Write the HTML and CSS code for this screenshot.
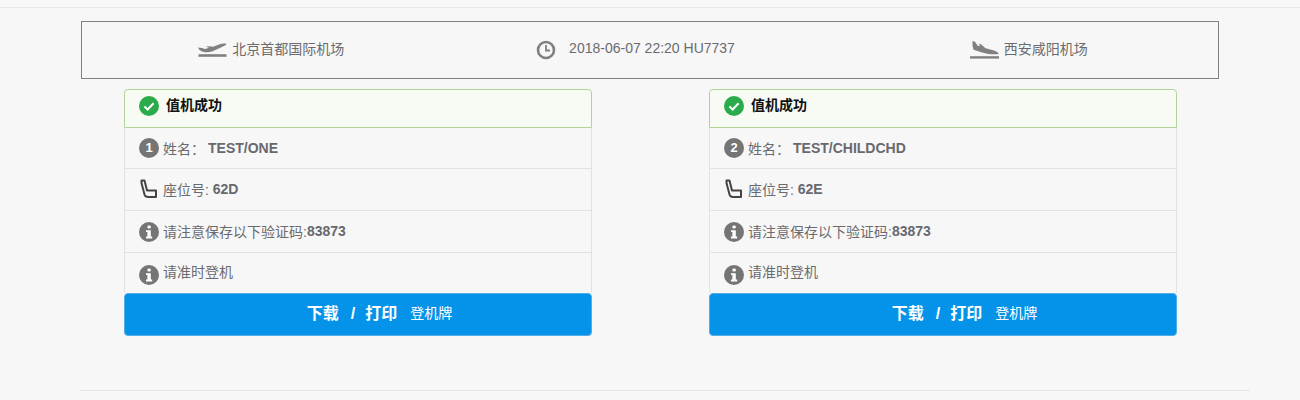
FILE: index.html
```html
<!DOCTYPE html>
<html lang="zh-CN">
<head>
  <meta charset="UTF-8">
  <meta name="viewport" content="width=device-width, initial-scale=1.0">
  <title>值机成功</title>
  <link rel="stylesheet" href="styles.css">
</head>
<body>
  <div class="top-line"></div>

  <div class="main">
    <div class="flight">
      <div class="flight-item">
        <svg class="plane" viewBox="0 0 29 18"><path d="M0 6.5 L4 7 L7 8 L11 6.8 L8 5.8 L10 5.2 L15 5.8 L21 3.4 C23.5 2.5 27 2.2 28.4 3 C28.6 3.8 26 5 23.5 6.2 L14 10.6 C10 11.6 6 11.4 4 10.6 L1.5 9 Z"/><rect x="0.5" y="13.2" width="28" height="2.6"/></svg>
        <span>北京首都国际机场</span>
      </div>
      <div class="flight-item flight-time">
        <svg class="clock" viewBox="0 0 20 20"><circle cx="10" cy="10" r="8" fill="none" stroke="#808080" stroke-width="2.6"/><path d="M10 5v5.5h4" fill="none" stroke="#808080" stroke-width="1.8"/></svg>
        <span>2018-06-07 22:20 HU7737</span>
      </div>
      <div class="flight-item">
        <svg class="plane" viewBox="0 0 29 18"><path d="M2.5 0 L5 .8 L7.5 4.6 L10 5.2 L9 2.8 L11 3.2 L15.5 7.2 L24 9.6 C26.5 10.4 28.5 11.6 28.6 13 C25 13.6 18 13.2 12 11.4 L3.5 8.8 L2.5 5 Z"/><rect x="0" y="15.2" width="29" height="2.4"/></svg>
        <span>西安咸阳机场</span>
      </div>
    </div>

    <div class="passengers">
      <div class="col">
        <div class="card">
          <div class="success">
            <svg class="icon" viewBox="0 0 20 20"><circle cx="10" cy="10" r="10" fill="#2bab4c"/><path d="M5.4 10.4l3.2 3.1 6-6.3" fill="none" stroke="#fff" stroke-width="2"/></svg>
            <b>值机成功</b>
          </div>
          <div class="row row-name"><i class="num">1</i><span>姓名：</span><b class="name">TEST/ONE</b></div>
          <div class="row">
            <svg class="seat" viewBox="0 0 18 20"><path d="M1.5 1.5 H4.5 L7 11.5 H16 V18 H8 C6 18 5 17 4.5 15.5 L1.5 4 Z" fill="none" stroke="#444" stroke-width="2" stroke-linejoin="round"/></svg>
            <span>座位号: </span><b>62D</b>
          </div>
          <div class="row">
            <svg class="icon" viewBox="0 0 20 20"><circle cx="10" cy="10" r="10" fill="#757575"/><rect x="8.4" y="3.4" width="3.4" height="3.2" rx="1.4" fill="#fff"/><path d="M7 8.2h4.8v6.4h1.4v1.8H7v-1.8h1.4V10H7z" fill="#fff"/></svg>
            <span>请注意保存以下验证码:</span><b>83873</b>
          </div>
          <div class="row row-last">
            <svg class="icon" viewBox="0 0 20 20"><circle cx="10" cy="10" r="10" fill="#757575"/><rect x="8.4" y="3.4" width="3.4" height="3.2" rx="1.4" fill="#fff"/><path d="M7 8.2h4.8v6.4h1.4v1.8H7v-1.8h1.4V10H7z" fill="#fff"/></svg>
            <span>请准时登机</span>
          </div>
          <a class="print-btn" href="#"><strong><span>下载</span><span>/</span><span class="print-word">打印</span></strong><small>登机牌</small></a>
        </div>
      </div>

      <div class="col">
        <div class="card">
          <div class="success">
            <svg class="icon" viewBox="0 0 20 20"><circle cx="10" cy="10" r="10" fill="#2bab4c"/><path d="M5.4 10.4l3.2 3.1 6-6.3" fill="none" stroke="#fff" stroke-width="2"/></svg>
            <b>值机成功</b>
          </div>
          <div class="row row-name"><i class="num">2</i><span>姓名：</span><b class="name">TEST/CHILDCHD</b></div>
          <div class="row">
            <svg class="seat" viewBox="0 0 18 20"><path d="M1.5 1.5 H4.5 L7 11.5 H16 V18 H8 C6 18 5 17 4.5 15.5 L1.5 4 Z" fill="none" stroke="#444" stroke-width="2" stroke-linejoin="round"/></svg>
            <span>座位号: </span><b>62E</b>
          </div>
          <div class="row">
            <svg class="icon" viewBox="0 0 20 20"><circle cx="10" cy="10" r="10" fill="#757575"/><rect x="8.4" y="3.4" width="3.4" height="3.2" rx="1.4" fill="#fff"/><path d="M7 8.2h4.8v6.4h1.4v1.8H7v-1.8h1.4V10H7z" fill="#fff"/></svg>
            <span>请注意保存以下验证码:</span><b>83873</b>
          </div>
          <div class="row row-last">
            <svg class="icon" viewBox="0 0 20 20"><circle cx="10" cy="10" r="10" fill="#757575"/><rect x="8.4" y="3.4" width="3.4" height="3.2" rx="1.4" fill="#fff"/><path d="M7 8.2h4.8v6.4h1.4v1.8H7v-1.8h1.4V10H7z" fill="#fff"/></svg>
            <span>请准时登机</span>
          </div>
          <a class="print-btn" href="#"><strong><span>下载</span><span>/</span><span class="print-word">打印</span></strong><small>登机牌</small></a>
        </div>
      </div>
    </div>

    <div class="bottom-line"></div>
  </div>
</body>
</html>
```

FILE: styles.css
```css
body {
  margin: 0;
  height: 400px;
  overflow: hidden;
  background-color: #f7f7f7;
  font-family: "Liberation Sans", "Noto Sans CJK SC", sans-serif;
  font-size: 14px;
  color: #6b6b6f;
}
.top-line {
  height: 7px;
  border-bottom: 1px solid #e6e6e6;
}
.main {
  width: 1170px;
  margin-left: 80px;
  padding-top: 13px;
}

/* flight summary */
.flight {
  box-sizing: border-box;
  width: 1138px;
  height: 58px;
  margin-left: 1px;
  border: 1px solid #808080;
  display: grid;
  grid-template-columns: repeat(3, 1fr);
  align-items: center;
}
.flight-item {
  display: flex;
  justify-content: center;
  align-items: center;
  gap: 5px;
}
.flight-item span {
  margin-bottom: 5px;
}
.flight-time {
  gap: 13px;
  padding-right: 29px;
}
.plane {
  width: 29px;
  height: 18px;
  fill: #808080;
}
.clock {
  width: 20px;
  height: 20px;
}

/* passenger cards */
.passengers {
  display: grid;
  grid-template-columns: 585px 585px;
  margin-top: 10px;
}
.col {
  padding-left: 44px;
}
.card {
  width: 468px;
}
.success {
  box-sizing: border-box;
  height: 39px;
  padding: 0 14px 6px;
  display: flex;
  align-items: center;
  gap: 7px;
  background-color: #f8fbf3;
  border: 1px solid #b1d39a;
  border-radius: 4px 4px 0 0;
  color: #111;
}
.success b {
  margin-bottom: 4px;
}
.icon {
  width: 20px;
  height: 20px;
  flex: none;
}
.row {
  box-sizing: border-box;
  height: 42px;
  padding: 0 14px 2px;
  display: flex;
  align-items: center;
  white-space: pre;
  border-left: 1px solid #e2e2e2;
  border-right: 1px solid #e2e2e2;
  border-bottom: 1px solid #e2e2e2;
}
.row .icon {
  margin: 3px 4px 0 0;
}
.row b {
  color: #68696f;
}
.row-name {
  height: 41px;
  padding-bottom: 0;
}
.name {
  margin-left: 3px;
}
.num {
  width: 20px;
  height: 20px;
  flex: none;
  margin-right: 4px;
  border-radius: 50%;
  background-color: #757575;
  color: #fff;
  font-style: normal;
  font-weight: bold;
  font-size: 13px;
  line-height: 20px;
  text-align: center;
}
.seat {
  width: 18px;
  height: 20px;
  flex: none;
  margin: 1px 5px 0 1px;
}
.row-last {
  height: 40px;
  padding-bottom: 4px;
  border-bottom: none;
}
.row-last .icon {
  margin-top: 8px;
}
.print-btn {
  box-sizing: border-box;
  height: 43px;
  padding: 0 0 6px 43px;
  display: flex;
  justify-content: center;
  align-items: center;
  gap: 13px;
  background-color: #0593ea;
  border: 1px solid #52ade6;
  border-radius: 4px;
  color: #fff;
  text-decoration: none;
}
.print-btn strong {
  display: flex;
  align-items: baseline;
  gap: 12px;
  font-size: 16px;
}
.print-word {
  margin-left: -2px;
}
.print-btn small {
  font-size: 14px;
}
.bottom-line {
  height: 1px;
  margin-top: 54px;
  background-color: #e6e6e6;
}
```
